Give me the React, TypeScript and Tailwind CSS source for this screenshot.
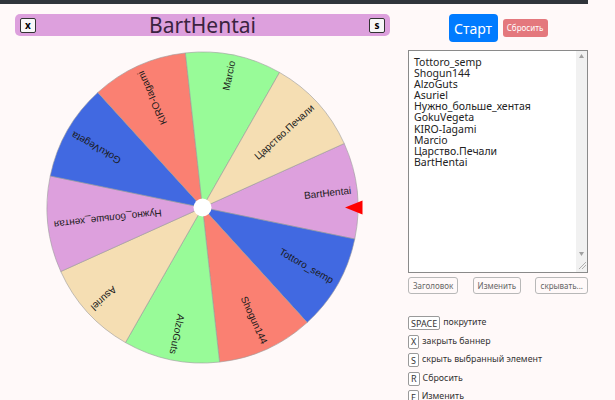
import React from "react";

const names = [
  "BartHentai",
  "Tottoro_semp",
  "Shogun144",
  "AlzoGuts",
  "Asuriel",
  "Нужно_больше_хентая",
  "GokuVegeta",
  "KIRO-Iagami",
  "Marcio",
  "Царство.Печали",
];
const colors = ["#dda0dd", "#4169e1", "#fa8072", "#98fb98", "#f5deb3"];
const listNames = [
  "Tottoro_semp",
  "Shogun144",
  "AlzoGuts",
  "Asuriel",
  "Нужно_больше_хентая",
  "GokuVegeta",
  "KIRO-Iagami",
  "Marcio",
  "Царство.Печали",
  "BartHentai",
];

function Wheel() {
  const cx = 160.5;
  const cy = 160.5;
  const r = 155.5;
  const base = -24.3;
  const rad = (d: number) => (d * Math.PI) / 180;
  return (
    <svg width={332} height={324} className="block">
      {names.map((n, i) => {
        const a0 = base + i * 36;
        const a1 = a0 + 36;
        const x0 = cx + r * Math.cos(rad(a0));
        const y0 = cy + r * Math.sin(rad(a0));
        const x1 = cx + r * Math.cos(rad(a1));
        const y1 = cy + r * Math.sin(rad(a1));
        return (
          <path
            key={"p" + i}
            d={`M ${cx} ${cy} L ${x0} ${y0} A ${r} ${r} 0 0 1 ${x1} ${y1} Z`}
            fill={colors[i % 5]}
            stroke="#9a9a9a"
            strokeWidth={0.6}
          />
        );
      })}
      {names.map((n, i) => {
        const mid = base + i * 36 + 18;
        return (
          <g key={"t" + i} transform={`rotate(${mid} ${cx} ${cy})`}>
            <text
              x={cx + r - 6}
              y={cy}
              textAnchor="end"
              dominantBaseline="middle"
              fontSize={10}
              fill="#1a1a1a"
              fontFamily="'Liberation Sans', Arial, sans-serif"
            >
              {n}
            </text>
          </g>
        );
      })}
      <circle cx={cx} cy={cy} r={9} fill="#ffffff" />
      <polygon
        points={`${cx + 142.5},${cy} ${cx + 160},${cy - 7} ${cx + 160},${cy + 7}`}
        fill="#ff0000"
      />
    </svg>
  );
}

function Kbd({ children }: { children: React.ReactNode }) {
  return (
    <span className="inline-flex h-[14px] items-center rounded-[2px] border border-[#9a9a9a] bg-white px-[2px] text-[9px] leading-none text-[#333]">
      {children}
    </span>
  );
}

export default function App() {
  const font = { fontFamily: "'Noto Sans', 'Open Sans', sans-serif" };
  return (
    <div
      className="relative h-[400px] w-[615px] overflow-hidden bg-[#fff9f9]"
      style={font}
    >
      <div className="h-[4px] w-[588px] bg-[#30353b]" />
      <div className="flex">
        <div className="w-[400px]">
          <div className="ml-[15px] mt-[10px] flex h-[22px] w-[375px] items-center justify-between rounded-[5px] bg-[#dda0dd] px-[5px]">
            <span className="flex h-[15px] w-[16px] items-center justify-center rounded-[2px] border border-[#333] bg-[#f8f8f8] text-[10px] font-bold leading-none text-black">
              x
            </span>
            <span className="text-[21px] leading-none text-[#3a2340]">
              BartHentai
            </span>
            <span className="flex h-[15px] w-[16px] items-center justify-center rounded-[2px] border border-[#333] bg-[#f8f8f8] text-[10px] font-bold leading-none text-black">
              s
            </span>
          </div>
          <div className="ml-[42px] mt-[11px]">
            <Wheel />
          </div>
        </div>
        <div className="ml-[8px] w-[180px]">
          <div className="mt-[10px] flex items-center justify-center gap-[5px]">
            <div className="flex h-[28px] w-[49px] items-center justify-center rounded-[4px] bg-[#007bff] text-[14px] text-white">
              Старт
            </div>
            <div className="flex h-[18px] w-[45px] items-center justify-center rounded-[3px] bg-[#e4787d] text-[8px] text-white">
              Сбросить
            </div>
          </div>
          <div className="mt-[8px] flex h-[223px] w-[180px] border border-[#8a8a8a] bg-white">
            <div className="flex-1 pl-[5px] pt-[6px] text-[10.5px] leading-[11.1px] text-[#222]">
              {listNames.map((n) => (
                <div key={n} className="whitespace-nowrap">
                  {n}
                </div>
              ))}
            </div>
            <div className="relative flex w-[11px] flex-col items-center justify-between bg-[#f1f1f1] py-[3px]">
              <svg width={5} height={4}>
                <polygon points="0,4 2.5,0 5,4" fill="#a0a0a0" />
              </svg>
              <div className="flex flex-col items-center gap-[5px]">
                <svg width={5} height={4}>
                  <polygon points="0,0 2.5,4 5,0" fill="#a0a0a0" />
                </svg>
                <svg width={8} height={8}>
                  <line x1={1} y1={8} x2={8} y2={1} stroke="#b0b0b0" />
                  <line x1={4} y1={8} x2={8} y2={4} stroke="#b0b0b0" />
                </svg>
              </div>
            </div>
          </div>
          <div className="mt-[4px] flex justify-between">
            <div className="flex h-[17px] items-center rounded-[3px] border border-[#b8b8b8] px-[4px] text-[8px] text-[#666]">
              Заголовок
            </div>
            <div className="flex h-[17px] items-center rounded-[3px] border border-[#b8b8b8] px-[4px] text-[8px] text-[#666]">
              Изменить
            </div>
            <div className="flex h-[17px] items-center rounded-[3px] border border-[#b8b8b8] px-[4px] text-[8px] text-[#666]">
              скрывать...
            </div>
          </div>
          <div className="mt-[22px] flex flex-col gap-[4.5px] text-[8.8px] text-[#333]">
            <div className="flex items-center gap-[3px]">
              <Kbd>SPACE</Kbd>
              <span>покрутите</span>
            </div>
            <div className="flex items-center gap-[3px]">
              <Kbd>X</Kbd>
              <span>закрыть баннер</span>
            </div>
            <div className="flex items-center gap-[3px]">
              <Kbd>S</Kbd>
              <span>скрыть выбранный элемент</span>
            </div>
            <div className="flex items-center gap-[3px]">
              <Kbd>R</Kbd>
              <span>Сбросить</span>
            </div>
            <div className="flex items-center gap-[3px]">
              <Kbd>F</Kbd>
              <span>Изменить</span>
            </div>
          </div>
        </div>
      </div>
    </div>
  );
}
